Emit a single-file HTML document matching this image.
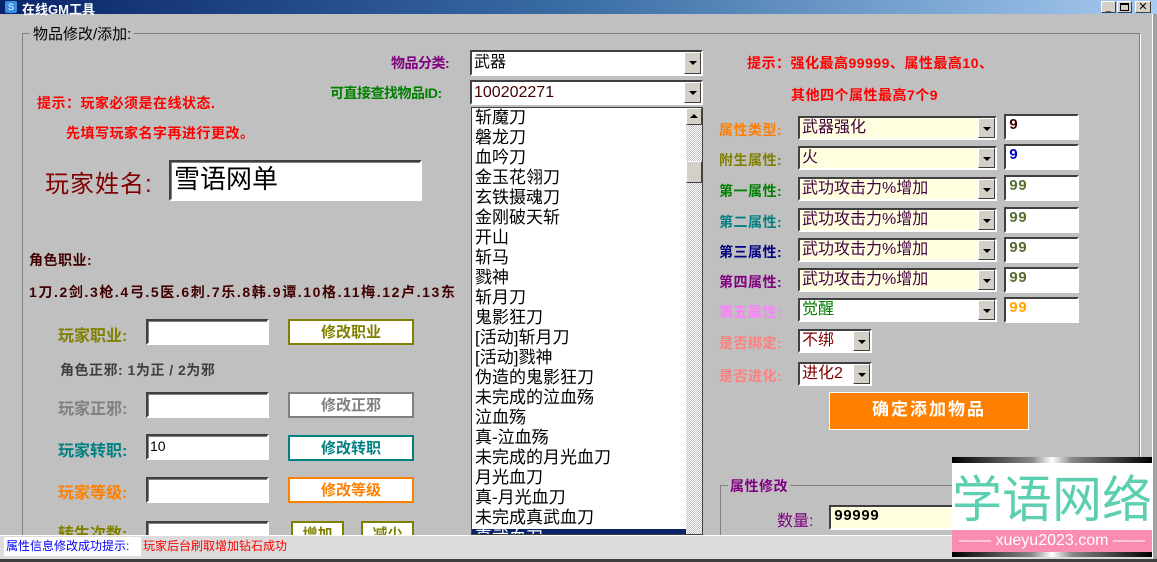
<!DOCTYPE html>
<html><head><meta charset="utf-8"><style>
*{margin:0;padding:0;box-sizing:border-box}
body{width:1157px;height:562px;overflow:hidden;background:#c0c0c0;font-family:"Liberation Sans","Noto Sans CJK SC","WenQuanYi Zen Hei",sans-serif;position:relative}
.a{position:absolute;white-space:nowrap}
.b{font-weight:bold;font-size:14px;letter-spacing:-0.5px}
.in{position:absolute;background:#fff;border:2px solid;border-color:#404040 #fff #fff #404040;box-shadow:inset 1px 1px 0 #808080}
.btn{position:absolute;background:#fff;border:2px solid;text-align:center;font-weight:bold;font-size:15px}
.cb{position:absolute;border:2px solid;border-color:#404040 #fff #fff #404040;background:#ffffe0;font-size:16px;padding-left:2px;line-height:20px}
.cb i{position:absolute;right:0;top:0;width:17px;height:100%;background:#d4d0c8;border:1px solid;border-color:#fff #404040 #404040 #fff}
.cb i:after{content:"";position:absolute;left:4px;top:8px;border:4px solid transparent;border-top:4px solid #000;border-bottom:0}
.nb{position:absolute;background:#fff;border:2px solid;border-color:#404040 #fff #fff #404040;font-size:15px;padding-left:3px;line-height:20px;font-weight:bold;font-family:"Liberation Mono",monospace}
.r{font-size:14px;font-weight:bold;letter-spacing:0.5px}
</style></head><body>
<div class="a" style="left:0;top:0;width:1157px;height:14px;background:linear-gradient(90deg,#0a246a,#3a6ea5 50%,#a6caf0)"></div>
<div class="a" style="left:5px;top:1px;width:12px;height:12px;background:#3a8ee6;border-radius:2px;color:#fff;font-size:9px;text-align:center;line-height:12px">S</div>
<div class="a" style="left:22px;top:-1px;color:#fff;font-size:13px;font-weight:bold">在线GM工具</div>
<div class="a" style="left:1101px;top:1px;width:15px;height:12px;background:#d4d0c8;border:1px solid;border-color:#fff #404040 #404040 #fff;font-size:9px;text-align:center;line-height:10px">_</div>
<div class="a" style="left:1117px;top:1px;width:15px;height:12px;background:#d4d0c8;border:1px solid;border-color:#fff #404040 #404040 #fff"><div style="margin:1px 2px;width:9px;height:8px;border:1px solid #000;border-top-width:2px"></div></div>
<div class="a" style="left:1135px;top:1px;width:16px;height:12px;background:#d4d0c8;border:1px solid;border-color:#fff #404040 #404040 #fff;font-size:11px;text-align:center;line-height:10px">✕</div>
<div class="a" style="left:1152px;top:14px;width:5px;height:548px;background:#a0a0a0;border-left:1px solid #fff"></div>
<div class="a" style="left:22px;top:33px;width:1118px;height:520px;border:1px solid #808080;box-shadow:1px 1px 0 #fff"></div>
<div class="a" style="left:30px;top:23px;background:#c0c0c0;padding:0 3px;font-size:15px;color:#000">物品修改/添加:</div>

<div class="a b" style="left:391px;top:53px;color:#800080">物品分类:</div>
<div class="a b" style="left:330px;top:83px;color:#008000">可直接查找物品ID:</div>
<div class="cb" style="left:470px;top:50px;width:233px;height:26px;background:#fff;font-size:16px;line-height:21px">武器<i></i></div>
<div class="cb" style="left:470px;top:80px;width:233px;height:25px;background:#fff;font-size:16px;line-height:21px;color:#400">100202271<i></i></div>
<div class="a" style="left:471px;top:107px;width:232px;height:428px;background:#fff;border:1px solid #404040;overflow:hidden">
<div style="position:absolute;right:0;top:0;width:16px;height:100%;background:repeating-conic-gradient(#c0c0c0 0 25%,#fff 0 50%) 0 0/2px 2px"></div>
<div style="position:absolute;right:0;top:0;width:16px;height:17px;background:#d4d0c8;border:1px solid;border-color:#fff #404040 #404040 #fff"></div>
<div style="position:absolute;right:4px;top:6px;border:4px solid transparent;border-bottom:4px solid #000;border-top:0"></div>
<div style="position:absolute;right:0;top:53px;width:16px;height:22px;background:#d4d0c8;border:1px solid;border-color:#fff #404040 #404040 #fff"></div>
<div style="position:absolute;left:0;top:421px;width:214px;height:20px;background:#0a246a"></div>
<div style="position:absolute;left:3px;top:0;font-size:17px;line-height:20px;color:#000">斩魔刀<br>磐龙刀<br>血吟刀<br>金玉花翎刀<br>玄铁摄魂刀<br>金刚破天斩<br>开山<br>斩马<br>戮神<br>斩月刀<br>鬼影狂刀<br>[活动]斩月刀<br>[活动]戮神<br>伪造的鬼影狂刀<br>未完成的泣血殇<br>泣血殇<br>真-泣血殇<br>未完成的月光血刀<br>月光血刀<br>真-月光血刀<br>未完成真武血刀<br><span style="color:#fff">真武血刀</span></div>
</div>

<div class="a r" style="left:37px;top:93px;color:#f00">提示：玩家必须是在线状态.</div>
<div class="a r" style="left:66px;top:123px;color:#f00">先填写玩家名字再进行更改。</div>
<div class="a" style="left:45px;top:164px;color:#800000;font-size:24px;letter-spacing:1px">玩家姓名:</div>
<div class="in" style="left:169px;top:160px;width:253px;height:41px;font-size:26px;padding-left:3px;line-height:34px">雪语网单</div>
<div class="a r" style="left:29px;top:250px;color:#400000">角色职业:</div>
<div class="a r" style="left:29px;top:282px;color:#400000;letter-spacing:1.6px">1刀.2剑.3枪.4弓.5医.6刺.7乐.8韩.9谭.10格.11梅.12卢.13东</div>

<div class="a" style="left:58px;top:322px;color:#808000;font-size:16px;font-weight:bold">玩家职业:</div>
<div class="in" style="left:146px;top:319px;width:123px;height:26px"></div>
<div class="btn" style="left:288px;top:319px;width:126px;height:26px;border-color:#808000;color:#808000">修改职业</div>
<div class="a r" style="left:60px;top:360px;color:#404040">角色正邪: 1为正 / 2为邪</div>
<div class="a" style="left:58px;top:395px;color:#808080;font-size:16px;font-weight:bold">玩家正邪:</div>
<div class="in" style="left:146px;top:392px;width:123px;height:26px"></div>
<div class="btn" style="left:288px;top:392px;width:126px;height:26px;border-color:#808080;color:#808080">修改正邪</div>
<div class="a" style="left:58px;top:437px;color:#008080;font-size:16px;font-weight:bold">玩家转职:</div>
<div class="in" style="left:146px;top:434px;width:123px;height:26px;font-size:14px;padding-left:2px;line-height:20px">10</div>
<div class="btn" style="left:288px;top:435px;width:126px;height:26px;border-color:#008080;color:#008080">修改转职</div>
<div class="a" style="left:58px;top:479px;color:#ff8000;font-size:16px;font-weight:bold">玩家等级:</div>
<div class="in" style="left:146px;top:477px;width:123px;height:26px"></div>
<div class="btn" style="left:288px;top:477px;width:126px;height:26px;border-color:#ff8000;color:#ff8000">修改等级</div>
<div class="a" style="left:58px;top:520px;color:#808000;font-size:16px;font-weight:bold">转生次数:</div>
<div class="in" style="left:146px;top:521px;width:123px;height:26px"></div>
<div class="btn" style="left:291px;top:521px;width:53px;height:26px;border-color:#808000;color:#808000">增加</div>
<div class="btn" style="left:361px;top:521px;width:53px;height:26px;border-color:#808000;color:#808000">减少</div>

<div class="a r" style="left:747px;top:53px;color:#f00">提示：强化最高99999、属性最高10、</div>
<div class="a r" style="left:791px;top:85px;color:#f00">其他四个属性最高7个9</div>
<div class="a r" style="left:719px;top:120px;color:#ff8000">属性类型:</div>
<div class="a r" style="left:719px;top:150px;color:#808000">附生属性:</div>
<div class="a r" style="left:719px;top:181px;color:#008000">第一属性:</div>
<div class="a r" style="left:719px;top:212px;color:#008080">第二属性:</div>
<div class="a r" style="left:719px;top:242px;color:#000080">第三属性:</div>
<div class="a r" style="left:719px;top:272px;color:#800080">第四属性:</div>
<div class="a r" style="left:719px;top:302px;color:#ff80ff">第五属性:</div>
<div class="a r" style="left:719px;top:333px;color:#ff8080">是否绑定:</div>
<div class="a r" style="left:719px;top:366px;color:#ff8080">是否进化:</div>
<div class="cb" style="left:798px;top:116px;width:199px;height:24px;color:#400040">武器强化<i></i></div>
<div class="cb" style="left:798px;top:146px;width:199px;height:24px;color:#400040">火<i></i></div>
<div class="cb" style="left:798px;top:177px;width:199px;height:24px;color:#400040">武功攻击力%增加<i></i></div>
<div class="cb" style="left:798px;top:208px;width:199px;height:24px;color:#400040">武功攻击力%增加<i></i></div>
<div class="cb" style="left:798px;top:238px;width:199px;height:24px;color:#400040">武功攻击力%增加<i></i></div>
<div class="cb" style="left:798px;top:268px;width:199px;height:24px;color:#400040">武功攻击力%增加<i></i></div>
<div class="cb" style="left:798px;top:298px;width:199px;height:24px;background:#fff;color:#008000">觉醒<i></i></div>
<div class="cb" style="left:798px;top:329px;width:74px;height:24px;background:#fff;color:#800000">不绑<i></i></div>
<div class="cb" style="left:798px;top:362px;width:74px;height:24px;background:#fff;color:#800000">进化2<i></i></div>
<div class="nb" style="left:1004px;top:114px;width:75px;height:26px;color:#400000">9</div>
<div class="nb" style="left:1004px;top:144px;width:75px;height:26px;color:#0000c0">9</div>
<div class="nb" style="left:1004px;top:175px;width:75px;height:26px;color:#556b2f">99</div>
<div class="nb" style="left:1004px;top:207px;width:75px;height:26px;color:#556b2f">99</div>
<div class="nb" style="left:1004px;top:237px;width:75px;height:26px;color:#556b2f">99</div>
<div class="nb" style="left:1004px;top:267px;width:75px;height:26px;color:#556b2f">99</div>
<div class="nb" style="left:1004px;top:297px;width:75px;height:26px;color:#ffa500">99</div>
<div class="a" style="left:829px;top:392px;width:200px;height:38px;background:#ff8000;border:1px solid #fff;color:#fff;font-weight:bold;font-size:17px;text-align:center;line-height:34px;letter-spacing:2px">确定添加物品</div>

<div class="a" style="left:720px;top:485px;width:300px;height:60px;border:1px solid #808080;box-shadow:1px 1px 0 #fff"></div>
<div class="a r" style="left:728px;top:476px;background:#c0c0c0;color:#800080;padding:0 2px">属性修改</div>
<div class="a" style="left:777px;top:507px;color:#800080;font-size:16px">数量:</div>
<div class="nb" style="left:829px;top:505px;width:130px;height:25px;background:#ffffe0;color:#000">99999</div>

<div class="a" style="left:0;top:535px;width:1152px;height:24px;background:#dcdcdc;border-top:1px solid #fff"></div>
<div class="a" style="left:4px;top:537px;width:137px;height:19px;background:#fff;color:#00f;font-size:12px;line-height:19px;padding-left:2px">属性信息修改成功提示:</div>
<div class="a" style="left:143px;top:537px;color:#f00;font-size:12px;line-height:19px">玩家后台刷取增加钻石成功</div>
<div class="a" style="left:0;top:559px;width:1157px;height:3px;background:#404040"></div>

<div class="a" style="left:952px;top:457px;width:200px;height:100px;background:#fff">
<div style="height:6px;background:linear-gradient(90deg,#000,#888 40%,#fff 50%,#888 60%,#000)"></div>
<div style="height:67px;color:#5ccfb0;font-size:50px;line-height:67px;text-align:center;font-family:'Noto Sans CJK SC',sans-serif">学语网络</div>
<div style="height:22px;background:#f98cb0;color:#fff;font-size:16px;line-height:22px;text-align:center">—— xueyu2023.com ——</div>
<div style="height:5px;background:linear-gradient(90deg,#000,#888 40%,#fff 50%,#888 60%,#000)"></div>
</div>
</body></html>
